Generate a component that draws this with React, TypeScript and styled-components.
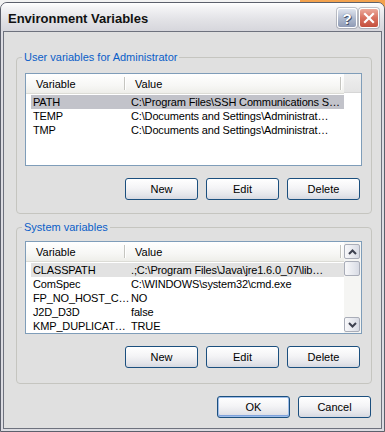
import styled, { createGlobalStyle, css } from "styled-components";

const GlobalStyle = createGlobalStyle`
  html, body {
    margin: 0;
    padding: 0;
  }
  body {
    width: 385px;
    height: 432px;
    overflow: hidden;
    background: linear-gradient(to right, #f2f2f2 0, #f2f2f2 300px, #f3a24e 300px);
    font-family: "Liberation Sans", Arial, sans-serif;
    font-size: 11px;
    color: #000;
  }
`;

const Window = styled.div`
  margin-top: 2px;
  width: 385px;
  height: 430px;
  box-sizing: border-box;
  border: 1px solid #5c606c;
  border-radius: 7px 7px 0 0;
  background: #dcdce2;
  display: flex;
  flex-direction: column;
  overflow: hidden;
`;

const TitleBar = styled.div`
  height: 28px;
  flex: none;
  display: flex;
  align-items: center;
  padding: 2px 5px 0 7px;
  box-sizing: border-box;
  background: linear-gradient(#ffffff 0, #f3f3f5 18%, #e2e2e6 60%, #d6d6dc 100%);
`;

const Title = styled.div`
  flex: 1;
  font-family: "Liberation Sans", Arial, sans-serif;
  font-weight: bold;
  font-size: 13px;
  color: #111;
`;

const CaptionButton = styled.div<{ $kind: "help" | "close" }>`
  width: 20px;
  height: 20px;
  box-sizing: border-box;
  border: 1px solid #ffffff;
  border-radius: 3px;
  display: flex;
  align-items: center;
  justify-content: center;
  margin-left: 2px;
  box-shadow: 0 0 0 1px rgba(90, 96, 116, 0.35);
  ${(p) =>
    p.$kind === "help"
      ? css`
          background: linear-gradient(#dfe4ee, #aeb8cc 55%, #8f9bb6);
          color: #fff;
          font-weight: bold;
          font-size: 15px;
          text-shadow: 0 0 1px #3d4a66, 1px 1px 0 #4a5670;
        `
      : css`
          background: linear-gradient(#ecaa9c, #d8705e 50%, #c4503e);
        `}
`;

const Client = styled.div`
  flex: 1;
  margin: 0 2px 2px;
  border: 1px solid #6e727e;
  background: #e0e0e0;
  padding: 19px 9px 0 12px;
  box-sizing: border-box;
  display: flex;
  flex-direction: column;
`;

const Group = styled.fieldset<{ $top: number; $bottom: number; $pt: number }>`
  margin: ${(p) => p.$top}px 0 0;
  padding: ${(p) => p.$pt}px 9px ${(p) => p.$bottom}px 8px;
  width: 356px;
  box-sizing: border-box;
  min-width: 0;
  border: 1px solid #c5c5c0;
  border-radius: 4px;
`;

const Legend = styled.legend`
  margin-left: -3px;
  padding: 0 2px;
  color: #0a5ec8;
  font-size: 11px;
  line-height: 13px;
`;

const ListView = styled.div`
  height: 93px;
  box-sizing: border-box;
  border: 1px solid #7f9db9;
  background: #fff;
  display: grid;
  grid-template-columns: 1fr 17px;
  overflow: hidden;
`;

const ListBody = styled.div`
  display: flex;
  flex-direction: column;
  min-width: 0;
`;

const Header = styled.div`
  height: 19px;
  flex: none;
  display: flex;
  align-items: center;
  background: linear-gradient(#ffffff, #f7f7f5 60%, #eeeeea);
  border-bottom: 1px solid #dcdcd6;
  margin-bottom: 1px;
`;

const HeaderCell = styled.div<{ $w: number }>`
  width: ${(p) => p.$w}px;
  flex: none;
  padding-left: 10px;
  box-sizing: border-box;
  color: #000;
`;

const Sep = styled.div`
  width: 1px;
  height: 13px;
  flex: none;
  background: #c5c5c0;
  box-shadow: 1px 0 0 #ffffff;
`;

const HeaderFill = styled.div`
  height: 19px;
  background: linear-gradient(#efefef, #e4e4e4);
  border-bottom: 1px solid #d6d6d6;
  box-sizing: border-box;
`;

const Row = styled.div<{ $hl?: string }>`
  height: 14px;
  margin-left: 5px;
  display: flex;
  align-items: center;
  background: ${(p) => p.$hl || "transparent"};
  white-space: nowrap;
  letter-spacing: -0.15px;
`;

const Cell = styled.div<{ $w?: number }>`
  ${(p) => (p.$w ? `width: ${p.$w}px; flex: none;` : "flex: 1;")}
  padding-left: 2px;
  box-sizing: border-box;
  overflow: hidden;
  min-width: 0;
`;

const ScrollBar = styled.div`
  background: #f5f5f3;
  display: flex;
  flex-direction: column;
  padding: 2px 1px 1px 0;
  box-sizing: border-box;
`;

const ScrollButton = styled.div`
  height: 15px;
  box-sizing: border-box;
  border: 1px solid #a9adb8;
  border-radius: 2px;
  background: linear-gradient(to right, #f8f8fa, #e6e8ee 60%, #d8dbe4);
  display: flex;
  align-items: center;
  justify-content: center;
  flex: none;
`;

const Thumb = styled(ScrollButton)`
  margin-top: 2px;
`;

const Track = styled.div`
  flex: 1;
`;

const ButtonRow = styled.div<{ $mt: number; $pr: number }>`
  display: flex;
  justify-content: flex-end;
  gap: 8px;
  margin-top: ${(p) => p.$mt}px;
  padding-right: ${(p) => p.$pr}px;
`;

const Button = styled.button<{ $default?: boolean }>`
  width: 73px;
  height: 22px;
  box-sizing: border-box;
  padding: 0;
  border: 1px solid #1b4f7e;
  border-radius: 3px;
  background: linear-gradient(#ffffff, #f4f4f6 45%, #e4e5ea 80%, #d6d8e0);
  font-family: "Liberation Sans", Arial, sans-serif;
  font-size: 11px;
  color: #000;
  ${(p) =>
    p.$default &&
    css`
      box-shadow: inset 0 0 0 1px #9ebde9, inset 0 -1px 0 1px #7ea2dc;
    `}
`;

const Chevron = ({ up }: { up?: boolean }) => (
  <svg width="9" height="6" viewBox="0 0 9 6">
    <path
      d={up ? "M1 5 L4.5 1.5 L8 5" : "M1 1 L4.5 4.5 L8 1"}
      fill="none"
      stroke="#3e4250"
      strokeWidth="2"
    />
  </svg>
);

const CloseX = () => (
  <svg width="12" height="12" viewBox="0 0 12 12">
    <path d="M2 2 L10 10 M10 2 L2 10" stroke="#fff" strokeWidth="2.2" strokeLinecap="square" />
  </svg>
);

type Entry = [string, string];

const userVars: Entry[] = [
  ["PATH", "C:\\Program Files\\SSH Communications S…"],
  ["TEMP", "C:\\Documents and Settings\\Administrat…"],
  ["TMP", "C:\\Documents and Settings\\Administrat…"],
];

const systemVars: Entry[] = [
  ["CLASSPATH", ".;C:\\Program Files\\Java\\jre1.6.0_07\\lib…"],
  ["ComSpec", "C:\\WINDOWS\\system32\\cmd.exe"],
  ["FP_NO_HOST_C…", "NO"],
  ["J2D_D3D", "false"],
  ["KMP_DUPLICAT…", "TRUE"],
];

const VarList = ({ rows, hl, scroll }: { rows: Entry[]; hl: string; scroll?: boolean }) => (
  <ListView>
    <ListBody>
      <Header>
        <HeaderCell $w={98}>Variable</HeaderCell>
        <Sep />
        <HeaderCell $w={215}>Value</HeaderCell>
        <Sep />
      </Header>
      {rows.map(([name, value], i) => (
        <Row key={name} $hl={i === 0 ? hl : undefined}>
          <Cell $w={98}>{name}</Cell>
          <Cell>{value}</Cell>
        </Row>
      ))}
    </ListBody>
    {scroll ? (
      <ScrollBar>
        <ScrollButton>
          <Chevron up />
        </ScrollButton>
        <Thumb />
        <Track />
        <ScrollButton>
          <Chevron />
        </ScrollButton>
      </ScrollBar>
    ) : (
      <div>
        <HeaderFill />
      </div>
    )}
  </ListView>
);

export default function App() {
  return (
    <>
      <GlobalStyle />
      <Window>
        <TitleBar>
          <Title>Environment Variables</Title>
          <CaptionButton $kind="help">?</CaptionButton>
          <CaptionButton $kind="close">
            <CloseX />
          </CaptionButton>
        </TitleBar>
        <Client>
          <Group $top={0} $pt={9} $bottom={13}>
            <Legend>User variables for Administrator</Legend>
            <VarList rows={userVars} hl="#c2c3ca" />
            <ButtonRow $mt={12} $pr={2}>
              <Button>New</Button>
              <Button>Edit</Button>
              <Button>Delete</Button>
            </ButtonRow>
          </Group>
          <Group $top={7} $pt={7} $bottom={15}>
            <Legend>System variables</Legend>
            <VarList rows={systemVars} hl="#e2e2e2" scroll />
            <ButtonRow $mt={12} $pr={2}>
              <Button>New</Button>
              <Button>Edit</Button>
              <Button>Delete</Button>
            </ButtonRow>
          </Group>
          <ButtonRow $mt={12} $pr={1}>
            <Button $default>OK</Button>
            <Button>Cancel</Button>
          </ButtonRow>
        </Client>
      </Window>
    </>
  );
}
